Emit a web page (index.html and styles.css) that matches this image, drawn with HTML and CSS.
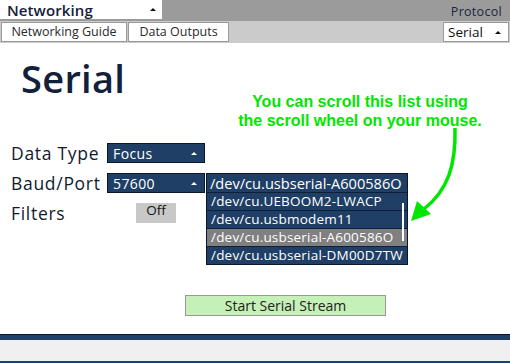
FILE: index.html
```html
<!DOCTYPE html>
<html>
<head>
<meta charset="utf-8">
<link rel="stylesheet" href="styles.css">
</head>
<body>
<div class="topbar">
  <div class="netsel"><span>Networking</span><i class="caret dark"></i></div>
  <div class="protocol">Protocol</div>
</div>
<div class="tabbar">
  <div class="tab t1">Networking Guide</div>
  <div class="tab t2">Data Outputs</div>
  <div class="protosel"><span>Serial</span><i class="caret dark"></i></div>
</div>
<div class="main">
  <h1 class="title">Serial</h1>
  <div class="form">
    <div class="row">
      <div class="label">Data Type</div>
      <div class="drop"><span>Focus</span><i class="caret"></i></div>
    </div>
    <div class="row row2">
      <div class="label">Baud/Port</div>
      <div class="drop"><span>57600</span><i class="caret"></i></div>
      <div class="portlist">
        <div class="port first">/dev/cu.usbserial-A600586O</div>
        <div class="port">/dev/cu.UEBOOM2-LWACP</div>
        <div class="port">/dev/cu.usbmodem11</div>
        <div class="port hl">/dev/cu.usbserial-A600586O</div>
        <div class="port">/dev/cu.usbserial-DM00D7TW</div>
        <div class="scrollbar"></div>
      </div>
    </div>
    <div class="row">
      <div class="label">Filters</div>
      <div class="off">Off</div>
    </div>
  </div>
  <div class="start">Start Serial Stream</div>
</div>
<div class="footer">
  <div class="fnavy"></div>
  <div class="fgray"></div>
  <div class="fnavy2"></div>
</div>
<div class="note">You can scroll this list using<br>the scroll wheel on your mouse.</div>
<svg class="arrow" width="510" height="363" viewBox="0 0 510 363">
  <path d="M455,128 C456,165 448,190 424,209" fill="none" stroke="#00e600" stroke-width="3.5"/>
  <polygon points="411,221 417,201 431,214" fill="#00e600"/>
</svg>
</body>
</html>
```
FILE: styles.css
```css
* { box-sizing: border-box; }
html, body { margin: 0; padding: 0; }
body {
  width: 510px;
  height: 363px;
  position: relative;
  overflow: hidden;
  background: #fff;
  font-family: "Open Sans", "Noto Sans", sans-serif;
  color: #14203a;
}
.topbar {
  height: 21px;
  background: #9b9b9b;
  display: flex;
  justify-content: space-between;
}
.netsel {
  width: 162px;
  height: 19px;
  background: #fff;
  display: flex;
  align-items: center;
  justify-content: space-between;
  padding: 0 6px 0 7px;
  font-size: 15px;
  font-weight: 600;
  color: #16203a;
  letter-spacing: 0.1px;
}
.protocol {
  font-size: 12.5px;
  color: #1a2540;
  padding: 4px 8px 0 0;
  line-height: 16px;
  letter-spacing: 0.3px;
}
.caret {
  display: inline-block;
  width: 0;
  height: 0;
  border-left: 3px solid transparent;
  border-right: 3px solid transparent;
  border-bottom: 3px solid #fff;
}
.caret.dark { border-bottom-color: #111; }
.tabbar {
  height: 22px;
  background: #cbcbcb;
  display: flex;
  padding: 1px;
  gap: 1px;
}
.tab {
  height: 20px;
  background: #fff;
  border: 1px solid #9a9a9a;
  font-size: 12.5px;
  line-height: 18px;
  color: #2a2a2a;
  text-align: center;
}
.t1 { width: 126px; }
.t2 { width: 101px; }
.protosel {
  margin-left: auto;
  width: 66px;
  height: 20px;
  background: #fff;
  border: 1px solid #9a9a9a;
  display: flex;
  align-items: center;
  justify-content: space-between;
  padding: 0 7px 0 4px;
  font-size: 13.5px;
  color: #111;
}
.main {
  height: 291px;
}
.title {
  margin: 0;
  padding: 12px 0 0 21px;
  font-size: 38px;
  line-height: 46px;
  font-weight: 600;
  color: #13203a;
  letter-spacing: 0.3px;
}
.form {
  margin-top: 42px;
  display: flex;
  flex-direction: column;
  gap: 10px;
}
.row {
  display: flex;
  align-items: center;
  height: 20px;
}
.row2 { position: relative; }
.label {
  width: 107px;
  padding-left: 11px;
  font-size: 17.5px;
  font-weight: 500;
  line-height: 20px;
  color: #111a2e;
  letter-spacing: 0.7px;
}
.drop {
  width: 98px;
  height: 20px;
  background: #1f3f66;
  border: 1px solid #0b1728;
  display: flex;
  align-items: center;
  justify-content: space-between;
  padding: 0 7px 0 5px;
  color: #fff;
  font-size: 14px;
  font-weight: 500;
  letter-spacing: 0.4px;
}
.portlist {
  position: absolute;
  left: 206px;
  top: 0;
  width: 202px;
  background: #1f3f66;
  border: 1px solid #0b1728;
  color: #fff;
}
.port {
  height: 18px;
  line-height: 17px;
  font-size: 13.5px;
  padding-left: 4px;
  border-top: 1px solid #0e2038;
  white-space: nowrap;
  overflow: hidden;
  letter-spacing: 0.2px;
}
.port.first {
  height: 18px;
  border-top: none;
  font-size: 14.6px;
  line-height: 18px;
  letter-spacing: 0;
  padding-left: 3px;
}
.port.hl { background: #808080; }
.scrollbar {
  position: absolute;
  left: 195px;
  top: 29px;
  width: 2px;
  height: 38px;
  background: #fff;
}
.off {
  margin-left: 29px;
  width: 40px;
  height: 20px;
  background: #c8c8c8;
  font-size: 13.5px;
  line-height: 14px;
  text-align: center;
  color: #111;
}
.start {
  margin: 72px 0 0 185px;
  width: 201px;
  height: 21px;
  background: #c5f0b8;
  border: 1px solid #999;
  text-align: center;
  font-size: 14px;
  line-height: 19px;
  color: #222;
}
.footer { height: 29px; }
.fnavy {
  height: 6px;
  background: #1f4068;
  border-top: 1px solid #0c1828;
}
.fgray { height: 21px; background: #f0f0f0; }
.fnavy2 { height: 2px; background: #1f4068; }
.note {
  position: absolute;
  left: 230px;
  top: 92px;
  width: 260px;
  text-align: center;
  font-family: "Liberation Sans", Arial, sans-serif;
  font-weight: bold;
  font-size: 16px;
  line-height: 19px;
  color: #00e600;
}
.arrow {
  position: absolute;
  left: 0;
  top: 0;
  pointer-events: none;
}
```
